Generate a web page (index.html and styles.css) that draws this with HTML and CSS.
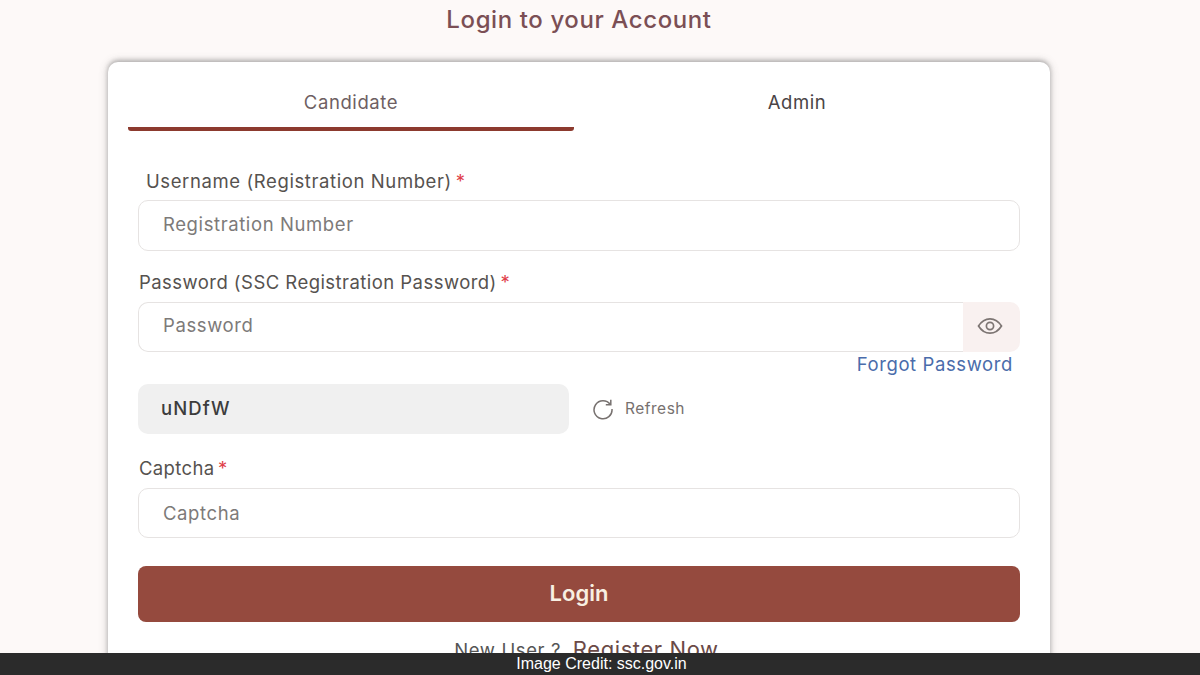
FILE: index.html
```html
<!DOCTYPE html>
<html lang="en">
<head>
<meta charset="utf-8">
<title>Login to your Account</title>
<link rel="stylesheet" href="styles.css">
</head>
<body>
<main class="page">
  <h1 class="title">Login to your Account</h1>
  <section class="card">
    <div class="tabs">
      <div class="tab tab-active">Candidate</div>
      <div class="tab">Admin</div>
    </div>
    <form class="form">
      <label class="label label-first">Username (Registration Number) <span class="req">*</span></label>
      <div class="field">Registration Number</div>
      <label class="label label-pass">Password (SSC Registration Password) <span class="req">*</span></label>
      <div class="pass-group">
        <div class="field field-pass">Password</div>
        <div class="eye-box">
          <svg width="26" height="18" viewBox="0 0 26 18" fill="none" stroke="#7d7573" stroke-width="1.7"><path d="M1.5 9C4.5 4.2 8.4 1.8 13 1.8S21.5 4.2 24.500 9C21.500 13.800 17.600 16.200 13 16.200S4.500 13.800 1.500 9Z"/><circle cx="13" cy="9" r="3.600"/></svg>
        </div>
      </div>
      <div class="forgot">Forgot Password</div>
      <div class="captcha-row">
        <div class="captcha-code">uNDfW</div>
        <div class="refresh">
          <svg width="22" height="22" viewBox="0 0 22 22" fill="none" stroke="#77716f" stroke-width="1.500"><path d="M18.300 6.500A9 9 0 1 0 20 11"/><path d="M18.800 1.800V6.800H13.800"/></svg>
          <span>Refresh</span>
        </div>
      </div>
      <label class="label label-captcha">Captcha <span class="req">*</span></label>
      <div class="field field-captcha">Captcha</div>
      <div class="login-btn">Login</div>
      <div class="register">New User ? <span class="register-link">Register Now</span></div>
    </form>
  </section>
</main>
<div class="credit">Image Credit: ssc.gov.in</div>
</body>
</html>
```
FILE: styles.css
```css
* { box-sizing: border-box; }
html, body { margin: 0; height: 675px; overflow: hidden; }
body {
  background: #fdf9f8;
  font-family: "Inter", "Lato", sans-serif;
  color: #555;
}
.page { height: 675px; overflow: hidden; padding-left: 108px; width: 1060px; }
.title {
  margin: 0;
  height: 62px;
  padding-top: 5px;
  text-align: center;
  width: 942px;
  font-size: 24px;
  line-height: 30px;
  font-weight: 500;
  letter-spacing: 0.6px;
  color: #7b4f55;
}
.card {
  width: 942px;
  height: 700px;
  background: #fff;
  border-radius: 10px;
  padding: 0 30px 0 20px;
  box-shadow: 0 -2px 4px rgba(90, 90, 90, 0.35), 0 0 10px rgba(90, 90, 90, 0.3);
}
.tabs { display: flex; height: 69px; }
.tab {
  flex: 1;
  text-align: center;
  padding-top: 28px;
  font-size: 18.500px;
  line-height: 24px;
  letter-spacing: 0.6px;
  color: #4a4446;
}
.tab-active {
  color: #6e5f63;
  border-bottom: 4px solid #8c3a2e;
  border-radius: 0 0 3px 3px;
}
.form {
  padding-left: 10px;
  display: flex;
  flex-direction: column;
  letter-spacing: 0.6px;
}
.label { font-size: 18.500px; line-height: 24px; color: #56524f; }
.label-first { margin: 38px 0 7px 8px; }
.label-pass { margin: 19px 0 8px 1px; letter-spacing: 0.45px; }
.label-captcha { margin: 22px 0 8px 1px; letter-spacing: 0.35px; }
.req { color: #e0404a; margin-left: -2px; }
.field {
  height: 51px;
  border: 1px solid #e6e3e2;
  border-radius: 10px;
  background: #fff;
  padding-left: 24px;
  font-size: 18.500px;
  line-height: 47px;
  color: #7d7a79;
}
.pass-group { display: flex; height: 50px; }
.field-pass { flex: 1; height: 50px; line-height: 45px; border-radius: 10px 0 0 10px; border-right: 0; }
.field-captcha { height: 50px; line-height: 49px; }
.eye-box {
  width: 57px;
  background: #f9f1f0;
  border-radius: 0 10px 10px 0;
  display: flex;
  align-items: center;
  justify-content: center;
  padding: 0 3px 3px 0;
}
.forgot {
  text-align: right;
  padding-right: 7px;
  font-size: 18.500px;
  line-height: 24px;
  color: #4a6cab;
}
.captcha-row { display: flex; align-items: center; margin-top: 8px; height: 50px; }
.captcha-code {
  width: 431px;
  height: 50px;
  background: #f0f0f0;
  border-radius: 10px;
  padding-left: 23px;
  font-size: 18.500px;
  line-height: 48px;
  font-weight: 500;
  letter-spacing: 1.100px;
  color: #3c3c3c;
}
.refresh {
  display: flex;
  align-items: center;
  gap: 11px;
  margin-left: 23px;
  padding-bottom: 1px;
  font-size: 15.500px;
  letter-spacing: 0.5px;
  color: #77716f;
}
.login-btn {
  margin-top: 28px;
  height: 56px;
  border-radius: 8px;
  background: #954a3e;
  color: #f8efe2;
  text-align: center;
  font-size: 22px;
  line-height: 54px;
  font-weight: 600;
  letter-spacing: 0;
}
.register {
  margin-top: 13px;
  padding-left: 15px;
  text-align: center;
  font-size: 18.500px;
  line-height: 28px;
  color: #555;
}
.register-link { font-size: 22px; color: #6b4a47; margin-left: 6px; }
.credit {
  position: absolute;
  left: 0;
  right: 0;
  top: 653px;
  height: 22px;
  background: #2b2b2b;
  color: #fff;
  text-align: center;
  font-family: "Liberation Sans", Arial, sans-serif;
  font-size: 16px;
  line-height: 22px;
  padding-left: 3px;
}
```
